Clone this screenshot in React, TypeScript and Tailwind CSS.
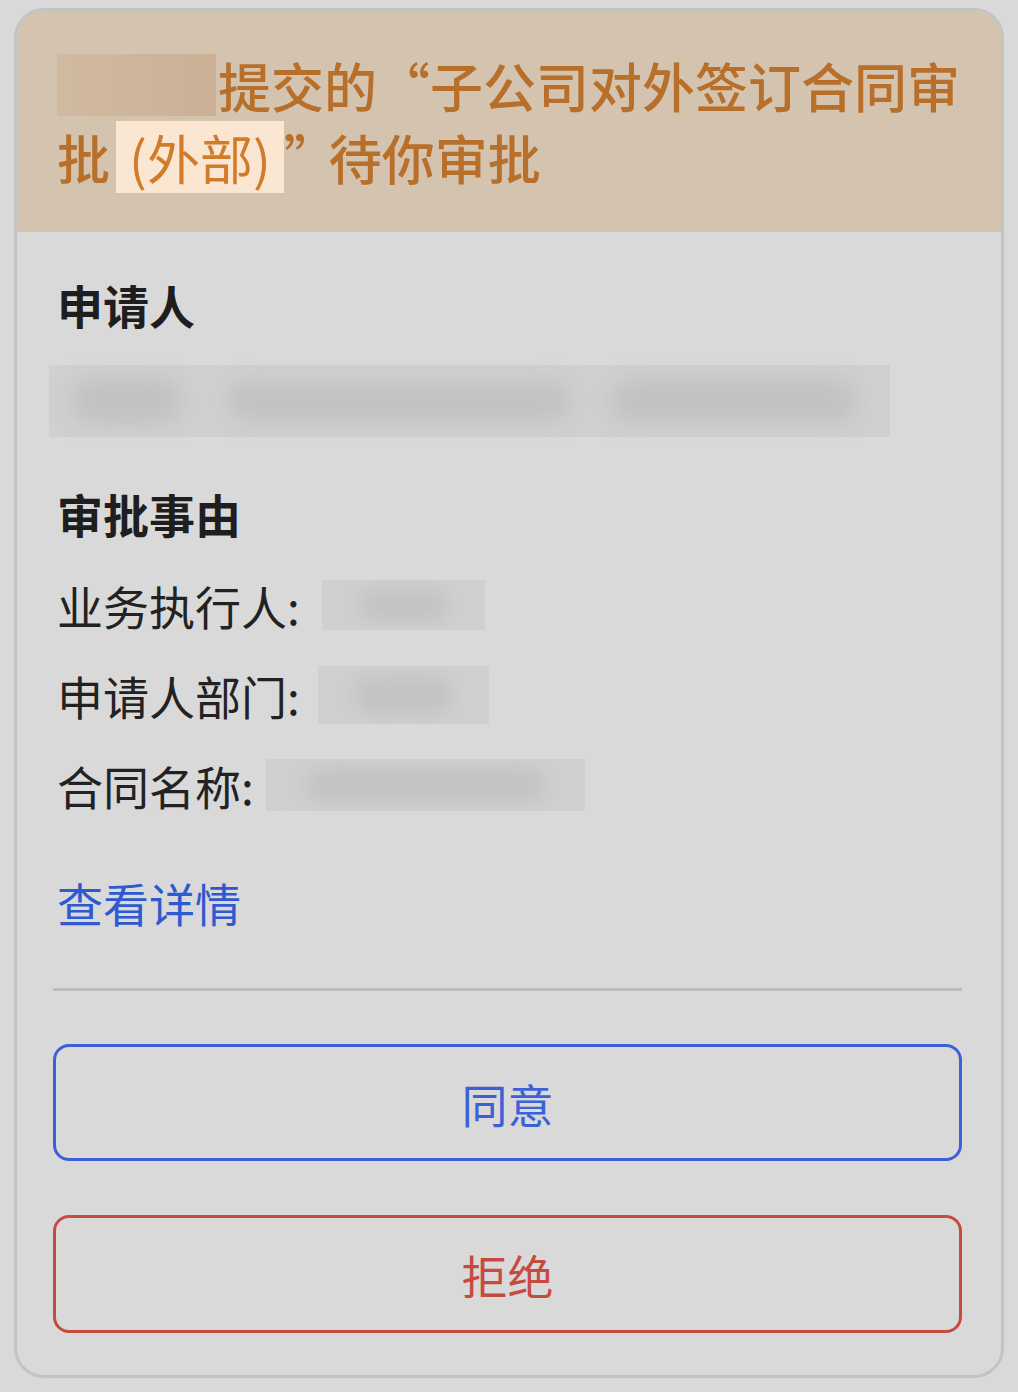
import React from 'react';

const font = { fontFamily: '"Noto Sans CJK SC", "Noto Sans", sans-serif' };

function Smudge({ className }: { className: string }) {
  return <div className={`rounded-full bg-[#c2c2c2] blur-[10px] ${className}`} />;
}

function FieldRow({ label, gap, box, blob }: { label: string; gap: string; box: string; blob: string }) {
  return (
    <div className="flex h-[60px] items-center">
      <span className="text-[46px] leading-none text-[#222222]">{label}</span>
      <div className={`flex items-center justify-center overflow-hidden bg-[#d0d0d0] ${gap} ${box}`}>
        <Smudge className={blob} />
      </div>
    </div>
  );
}

export default function App() {
  return (
    <div className="min-h-screen bg-[#d9d9d9] px-[14px] pt-[8px] pb-[14px]" style={font}>
      <div className="overflow-hidden rounded-[30px] border-[3px] border-[#c3c3c3] bg-[#d9d9d9]">
        {/* title */}
        <div className="h-[221px] bg-[#d4c3ae] pl-[40px] pt-[38px] text-[53px] font-medium text-[#b86f2a]">
          <div className="flex h-[72px] items-center">
            <div className="h-[62px] w-[159px] bg-gradient-to-r from-[#d1baa2] to-[#cbb095]" />
            <span className="ml-[2px] leading-none">提交的“子公司对外签订合同审</span>
          </div>
          <div className="flex h-[72px] items-center">
            <span className="leading-none">批</span>
            <span className="ml-[6px] flex h-[72px] items-center bg-[#fbe7d1] px-[13px] font-normal leading-none text-[#d17c2b]">
              (外部)
            </span>
            <span className="leading-none tracking-[-8px]">”</span>
            <span className="leading-none">待你审批</span>
          </div>
        </div>

        {/* body */}
        <div className="flex flex-col pl-[32px] pr-[39px] pb-[42px]">
          <div className="ml-[8px] mt-[42px] flex h-[60px] items-center text-[46px] font-semibold leading-none text-[#1e1e1e]">
            申请人
          </div>

          <div className="mt-[31px] flex h-[72px] w-[841px] items-center bg-[#d0d0d0] pl-[22px]">
            <Smudge className="h-[46px] w-[111px]" />
            <Smudge className="ml-[45px] h-[40px] w-[344px]" />
            <Smudge className="ml-[39px] h-[44px] w-[247px]" />
          </div>

          <div className="ml-[8px] mt-[46px] flex h-[60px] items-center text-[46px] font-semibold leading-none text-[#1e1e1e]">
            审批事由
          </div>

          <div className="ml-[8px] mt-[32px]">
            <FieldRow label="业务执行人:" gap="ml-[22px]" box="h-[50px] w-[163px]" blob="h-[32px] w-[90px]" />
          </div>
          <div className="ml-[8px] mt-[30px]">
            <FieldRow label="申请人部门:" gap="ml-[18px]" box="h-[58px] w-[171px]" blob="h-[38px] w-[100px]" />
          </div>
          <div className="ml-[8px] mt-[30px]">
            <FieldRow label="合同名称:" gap="ml-[12px]" box="h-[52px] w-[319px]" blob="h-[34px] w-[240px]" />
          </div>

          <div className="ml-[8px] mt-[57px] flex h-[60px] items-center text-[46px] leading-none text-[#2e59cf]">
            查看详情
          </div>

          <div className="ml-[4px] mt-[56px] h-[3px] bg-[#bcbcbc]" />

          <button className="ml-[4px] mt-[53px] flex h-[117px] items-center justify-center rounded-[16px] border-[3px] border-[#3a62d6] text-[46px] leading-none text-[#3a62d6]">
            同意
          </button>
          <button className="ml-[4px] mt-[54px] flex h-[118px] items-center justify-center rounded-[16px] border-[3px] border-[#c74a40] text-[46px] leading-none text-[#c74a40]">
            拒绝
          </button>
        </div>
      </div>
    </div>
  );
}
